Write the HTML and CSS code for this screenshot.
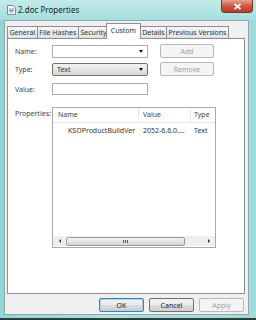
FILE: index.html
```html
<!DOCTYPE html>
<html lang="en">
<head>
    <meta charset="UTF-8">
    <title>2.doc Properties</title>
    <link rel="stylesheet" href="styles.css">
</head>
<body>
    <div class="window">
        <div class="titlebar">
            <svg class="doc-icon" width="9" height="10" viewBox="0 0 9 10">
                <path d="M0.5 0.5 H6 L8.5 3 V9.5 H0.5 Z" fill="#fff" stroke="#7a8aa0"/>
                <path d="M2 4 H7 M2 5.5 H7 M2 7 H6" stroke="#4a78c0" stroke-width="0.8"/>
            </svg>
            <span class="title">2.doc Properties</span>
            <div class="close">
                <svg width="9" height="7" viewBox="0 0 9 7">
                    <path d="M1.5 1 L7.5 6 M7.5 1 L1.5 6" stroke="#fff" stroke-width="1.8"/>
                </svg>
            </div>
        </div>

        <div class="client">
            <div class="tabs">
                <span class="tab">General</span>
                <span class="tab">File Hashes</span>
                <span class="tab">Security</span>
                <span class="tab active">Custom</span>
                <span class="tab">Details</span>
                <span class="tab">Previous Versions</span>
            </div>

            <div class="panel">
                <div class="row row-name">
                    <label class="field-label">Name:</label>
                    <div class="combo">
                        <span class="combo-text"></span>
                        <span class="arrow"></span>
                    </div>
                    <button class="btn small" disabled>Add</button>
                </div>
                <div class="row row-type">
                    <label class="field-label">Type:</label>
                    <div class="combo dropdown">
                        <span class="combo-text">Text</span>
                        <span class="arrow"></span>
                    </div>
                    <button class="btn small" disabled>Remove</button>
                </div>
                <div class="row row-value">
                    <label class="field-label">Value:</label>
                    <div class="textbox"></div>
                </div>
                <div class="row row-props">
                    <label class="field-label top">Properties:</label>
                    <div class="listview">
                        <div class="lv-header">
                            <span class="col col-name">Name</span>
                            <span class="col col-value">Value</span>
                            <span class="col col-type">Type</span>
                        </div>
                        <div class="lv-row">
                            <span class="col col-name indent">KSOProductBuildVer</span>
                            <span class="col col-value">2052-6.6.0....</span>
                            <span class="col col-type">Text</span>
                        </div>
                        <div class="lv-body"></div>
                        <div class="hscroll">
                            <span class="sarrow left"></span>
                            <div class="thumb"><span class="grip"></span></div>
                            <span class="sarrow right"></span>
                        </div>
                    </div>
                </div>
            </div>

            <div class="buttons">
                <button class="btn default">OK</button>
                <button class="btn">Cancel</button>
                <button class="btn" disabled>Apply</button>
            </div>
        </div>
    </div>
</body>
</html>
```

FILE: styles.css
```css
body {
    margin: 0;
    background-color: #2e3b3c;
    font-family: "Noto Sans", "DejaVu Sans", sans-serif;
    font-size: 7px;
    color: #333;
}

.window {
    width: 256px;
    height: 318px;
    box-sizing: border-box;
    padding: 0 7px 3px 4px;
    background: linear-gradient(90deg, #8fd6d6 0%, #a9e1df 40%, #9ddcda 100%);
    display: flex;
    flex-direction: column;
}

.titlebar {
    height: 20px;
    display: flex;
    align-items: flex-start;
    background: linear-gradient(#c3ebe9, #a3dfdd);
    margin: 0 -7px 0 -4px;
    padding: 0 3px 0 7px;
}

.doc-icon {
    margin-top: 5px;
}

.title {
    margin-top: 4px;
    margin-left: 2px;
    font-size: 8px;
    color: #222;
}

.close {
    margin-left: auto;
    width: 32px;
    height: 13px;
    display: flex;
    align-items: center;
    justify-content: center;
    background: linear-gradient(#e8a493 0%, #d2553d 50%, #c0381f 100%);
    border: 1px solid #6b3a33;
    border-top: none;
    border-radius: 0 0 4px 4px;
    box-sizing: border-box;
}

.client {
    flex: 1;
    background-color: #f0f0f0;
    border: 1px solid #8da8aa;
    padding: 1px 3px 0 2px;
    display: flex;
    flex-direction: column;
}

.tabs {
    display: flex;
    align-items: flex-end;
    height: 16px;
    position: relative;
    z-index: 1;
}

.tab {
    height: 12px;
    line-height: 12px;
    padding: 0 1.5px;
    border: 1px solid #898c95;
    border-bottom: none;
    margin-right: -1px;
    background: linear-gradient(#f6f6f6, #e1e1e1);
    color: #333;
    box-sizing: border-box;
    white-space: nowrap;
}

.tab.active {
    height: 16px;
    line-height: 13px;
    background: #ffffff;
    margin: 0 -1px 0 -2px;
    padding: 0 3.5px;
    position: relative;
    top: 1px;
}

.panel {
    height: 256px;
    background: #ffffff;
    border: 1px solid #898c95;
    padding: 5px 0 0 7px;
    box-sizing: border-box;
}

.row {
    display: flex;
    align-items: center;
}

.row-name {
    height: 14px;
}

.row-type {
    height: 14px;
    margin-top: 4px;
}

.row-value {
    height: 12px;
    margin-top: 7px;
}

.row-props {
    align-items: flex-start;
    margin-top: 12px;
}

.field-label {
    width: 37px;
    color: #444;
}

.field-label.top {
    padding-top: 2px;
}

.combo {
    width: 96px;
    height: 13px;
    border: 1px solid #abadb3;
    background: #fff;
    box-sizing: border-box;
    display: flex;
    align-items: center;
    padding: 0 4px;
}

.combo.dropdown {
    background: linear-gradient(#f2f2f2, #e6e6e6 50%, #d6d6d6);
    border-color: #707070;
    border-radius: 2px;
}

.combo-text {
    flex: 1;
}

.arrow {
    width: 0;
    height: 0;
    border-left: 2.5px solid transparent;
    border-right: 2.5px solid transparent;
    border-top: 3px solid #111;
}

.textbox {
    width: 96px;
    height: 12px;
    border: 1px solid #abadb3;
    box-sizing: border-box;
}

.btn {
    font-family: inherit;
    font-size: 7px;
    color: #222;
    height: 14px;
    width: 45px;
    padding: 0;
    border: 1px solid #707070;
    border-radius: 2px;
    background: linear-gradient(#f2f2f2 0%, #ebebeb 50%, #dddddd 51%, #cfcfcf 100%);
}

.btn.small {
    width: 54px;
    margin-left: 12px;
}

.btn:disabled {
    color: #a0a0a0;
    border-color: #b5b9bc;
    background: #f4f4f4;
}

.btn.default {
    border-color: #3c7fb1;
    box-shadow: inset 0 0 0 1px #a7d8f0;
}

.listview {
    width: 164px;
    height: 141px;
    border: 1px solid #a6a9b0;
    box-sizing: border-box;
    display: flex;
    flex-direction: column;
}

.lv-header {
    display: flex;
    height: 14px;
    border-bottom: 1px solid #e3e6ea;
    align-items: center;
    color: #444;
}

.lv-header .col {
    border-right: 1px solid #e3e6ea;
    height: 14px;
    line-height: 14px;
}

.lv-row {
    display: flex;
    margin-top: 2px;
    height: 11px;
    line-height: 11px;
}

.col {
    box-sizing: border-box;
    padding-left: 5px;
    white-space: nowrap;
    overflow: hidden;
}

.col-name {
    width: 86px;
}

.col-value {
    width: 52px;
    padding-left: 4px;
}

.col-type {
    flex: 1;
    border-right: none !important;
    padding-left: 3px;
}

.col.indent {
    padding-left: 15px;
}

.lv-body {
    flex: 1;
}

.hscroll {
    height: 10px;
    background: #eeeeee;
    display: flex;
    align-items: center;
    margin-bottom: 1px;
}

.sarrow {
    width: 13px;
    display: flex;
    justify-content: center;
}

.sarrow.left::before {
    content: "";
    border-top: 2.5px solid transparent;
    border-bottom: 2.5px solid transparent;
    border-right: 2.5px solid #333;
}

.sarrow.right::before {
    content: "";
    border-top: 2.5px solid transparent;
    border-bottom: 2.5px solid transparent;
    border-left: 2.5px solid #333;
}

.thumb {
    width: 119px;
    height: 9px;
    border: 1px solid #9a9a9a;
    border-radius: 2px;
    box-sizing: border-box;
    background: linear-gradient(#f3f3f3, #e4e4e4 50%, #d5d5d5);
    display: flex;
    align-items: center;
    justify-content: center;
    margin-right: auto;
}

.grip {
    width: 5px;
    height: 3px;
    background: repeating-linear-gradient(90deg, #555 0 1px, transparent 1px 2px);
}

.buttons {
    display: flex;
    justify-content: flex-end;
    gap: 5px;
    margin-top: 4px;
    padding-right: 1px;
}
```
